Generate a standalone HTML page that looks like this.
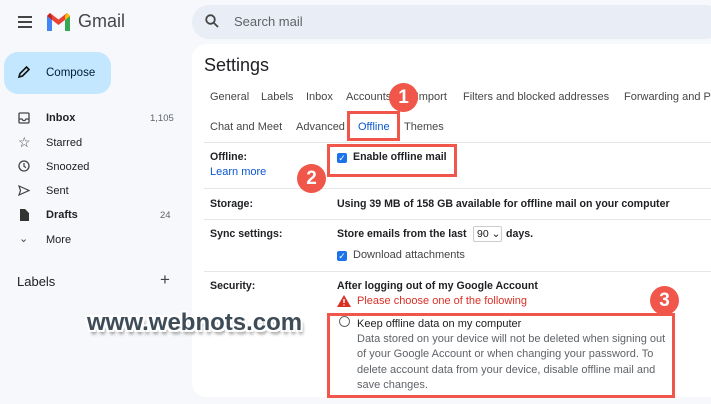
<!DOCTYPE html><html><head><style>
*{margin:0;padding:0;box-sizing:border-box}
body{width:711px;height:404px;background:#f6f8fc;font-family:"Liberation Sans",Arial,sans-serif;position:relative;overflow:hidden;color:#202124}
.a{position:absolute;white-space:nowrap}
.nav{font-size:11px;color:#202124}
.tab{font-size:11px;color:#444746}
.lbl{font-size:10.6px;font-weight:bold;color:#202124}
.line{position:absolute;left:204px;right:0;height:1px;background:#e6e6e6}
.box{position:absolute;border:3px solid #f0574a}
.circ{position:absolute;width:29px;height:29px;border-radius:50%;background:#f0574a;color:#fff;font-weight:bold;font-size:19px;text-align:center;line-height:29px}
.cb{position:absolute;width:10px;height:10px;background:#1a73e8;border-radius:2px;color:#fff;font-size:9px;line-height:10px;text-align:center}
</style></head><body>
<div class="a" style="left:18px;top:16px;width:14px;height:2px;background:#444;box-shadow:0 5px 0 #444,0 10px 0 #444"></div>
<svg class="a" style="left:47px;top:13px" width="23" height="18" viewBox="0 0 23 18"><path d="M0 3v15h5V7z" fill="#4285f4"/><path d="M18 7v11h5V3z" fill="#34a853"/><path d="M0 3l11.5 9L23 3 20 0l-8.5 6.5L3 0z" fill="#ea4335"/><path d="M18 3v4l5-4-3-3z" fill="#fbbc04"/><path d="M0 3l5 4V3L3 0z" fill="#c5221f"/></svg>
<div class="a" style="left:78px;top:11px;font-size:18px;color:#444746">Gmail</div>
<div class="a" style="left:192px;top:5px;width:530px;height:34px;border-radius:17px;background:#e9eef6"></div>
<svg class="a" style="left:205px;top:14px" width="14" height="14" viewBox="0 0 14 14"><circle cx="5.5" cy="5.5" r="4.3" fill="none" stroke="#444" stroke-width="1.8"/><path d="M8.7 8.7l4.3 4.3" stroke="#444" stroke-width="1.8"/></svg>
<div class="a" style="left:234px;top:14px;font-size:13px;color:#5f6368">Search mail</div>
<div class="a" style="left:4px;top:52px;width:107px;height:42px;border-radius:14px;background:#c2e7ff"></div>
<svg class="a" style="left:17px;top:66px" width="13" height="13" viewBox="0 0 13 13"><path d="M2 11l1-3.5L9.5 1l2.5 2.5L5.5 10z" fill="none" stroke="#111" stroke-width="1.6"/></svg>
<div class="a" style="left:46px;top:66px;font-size:11.5px;color:#001d35;line-height:14px">Compose</div>
<svg class="a" style="left:18px;top:112px" width="12" height="12" viewBox="0 0 12 12"><rect x="1" y="1" width="10" height="10" rx="1" fill="none" stroke="#444" stroke-width="1.3"/><path d="M1 7h3l1 1.5h2L8 7h3" fill="none" stroke="#444" stroke-width="1.2"/></svg>
<div class="a nav" style="left:46px;top:112px;font-weight:bold">Inbox</div>
<div class="a" style="left:150px;top:113px;font-size:9.5px;color:#5f6368">1,105</div>
<div class="a" style="left:18px;top:134px;font-size:14px;color:#444">☆</div>
<div class="a nav" style="left:46px;top:137px">Starred</div>
<svg class="a" style="left:18px;top:160px" width="12" height="12" viewBox="0 0 12 12"><circle cx="6" cy="6" r="5" fill="none" stroke="#444" stroke-width="1.3"/><path d="M6 3v3.3l2 1.3" fill="none" stroke="#444" stroke-width="1.2"/></svg>
<div class="a nav" style="left:46px;top:161px">Snoozed</div>
<svg class="a" style="left:18px;top:185px" width="12" height="11" viewBox="0 0 12 11"><path d="M1 1l10 4.5L1 10l1.5-4.5z" fill="none" stroke="#444" stroke-width="1.2"/></svg>
<div class="a nav" style="left:46px;top:185px">Sent</div>
<svg class="a" style="left:19px;top:209px" width="10" height="12" viewBox="0 0 10 12"><path d="M1 0h5l4 4v8H1z" fill="#333"/></svg>
<div class="a nav" style="left:46px;top:209px;font-weight:bold">Drafts</div>
<div class="a" style="left:160px;top:210px;font-size:9.5px;color:#5f6368">24</div>
<div class="a" style="left:19px;top:232px;font-size:11px;color:#444">⌄</div>
<div class="a nav" style="left:46px;top:234px">More</div>
<div class="a" style="left:17px;top:274px;font-size:13px;color:#202124">Labels</div>
<div class="a" style="left:160px;top:270px;font-size:17px;color:#444">+</div>
<div class="a" style="left:192px;top:44px;width:540px;height:353px;background:#fff;border-radius:14px"></div>
<div class="a" style="left:204px;top:55px;font-size:18px;color:#202124">Settings</div>
<div class="a tab" style="left:210px;top:91px">General</div>
<div class="a tab" style="left:261px;top:91px">Labels</div>
<div class="a tab" style="left:306px;top:91px">Inbox</div>
<div class="a tab" style="left:346px;top:91px">Accounts and Import</div>
<div class="a tab" style="left:463px;top:91px">Filters and blocked addresses</div>
<div class="a tab" style="left:624px;top:91px">Forwarding and POP</div>
<div class="a tab" style="left:210px;top:121px">Chat and Meet</div>
<div class="a tab" style="left:296px;top:121px">Advanced</div>
<div class="a tab" style="left:358px;top:121px;color:#0b57d0">Offline</div>
<div class="a tab" style="left:404px;top:121px">Themes</div>
<div class="a" style="left:352px;top:138px;width:42px;height:3px;background:#0b57d0"></div>
<div class="line" style="top:142px"></div>
<div class="a lbl" style="left:210px;top:151px">Offline:</div>
<div class="a" style="left:210px;top:166px;font-size:11px;color:#0b57d0">Learn more</div>
<div class="cb" style="left:337px;top:153px">✓</div>
<div class="a lbl" style="left:353px;top:151px">Enable offline mail</div>
<div class="line" style="top:188px"></div>
<div class="a lbl" style="left:210px;top:198px">Storage:</div>
<div class="a lbl" style="left:337px;top:198px">Using 39 MB of 158 GB available for offline mail on your computer</div>
<div class="line" style="top:219px"></div>
<div class="a lbl" style="left:210px;top:228px">Sync settings:</div>
<div class="a lbl" style="left:337px;top:228px">Store emails from the last</div>
<div class="a" style="left:473px;top:226px;width:29px;height:16px;border:1px solid #ccc;border-radius:2px;font-size:10.5px;padding-left:3px;line-height:14px">90 ⌄</div>
<div class="a lbl" style="left:506px;top:228px">days.</div>
<div class="cb" style="left:337px;top:251px">✓</div>
<div class="a" style="left:353px;top:249px;font-size:11px;color:#444">Download attachments</div>
<div class="line" style="top:271px"></div>
<div class="a lbl" style="left:210px;top:280px">Security:</div>
<div class="a lbl" style="left:337px;top:280px">After logging out of my Google Account</div>
<svg class="a" style="left:337px;top:295px" width="14" height="12" viewBox="0 0 14 12"><path d="M7 0l7 12H0z" fill="#d93025"/><path d="M7 4v4M7 9.5v1" stroke="#fff" stroke-width="1.4"/></svg>
<div class="a" style="left:357px;top:295px;font-size:11px;color:#d93025">Please choose one of the following</div>
<div class="a" style="left:339px;top:316px;width:11px;height:11px;border:1.3px solid #666;border-radius:50%"></div>
<div class="a" style="left:357px;top:318px;font-size:11px;color:#202124">Keep offline data on my computer</div>
<div class="a" style="left:357px;top:332px;font-size:11px;color:#5f6368;line-height:15.3px;white-space:normal;width:310px">Data stored on your device will not be deleted when signing out of your Google Account or when changing your password. To delete account data from your device, disable offline mail and save changes.</div>
<div class="box" style="left:347px;top:111px;width:53px;height:30px"></div>
<div class="box" style="left:327px;top:144px;width:130px;height:33px"></div>
<div class="box" style="left:327px;top:313px;width:348px;height:85px"></div>
<div class="circ" style="left:389px;top:83px">1</div>
<div class="circ" style="left:297px;top:164px">2</div>
<div class="circ" style="left:650px;top:286px">3</div>
<div class="a" style="left:87px;top:309px;font-size:24px;font-weight:bold;color:#3e4c58;text-shadow:-2px -2px 0 #fff,2px -2px 0 #fff,-2px 2px 0 #fff,2px 2px 0 #fff,2px 4px 3px #888">www.webnots.com</div>
</body></html>
